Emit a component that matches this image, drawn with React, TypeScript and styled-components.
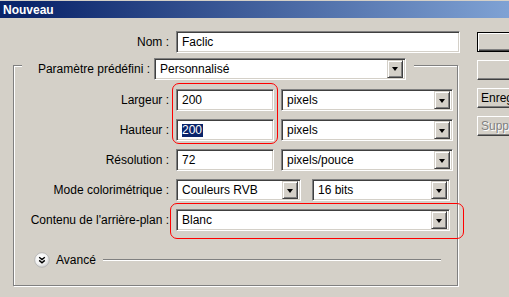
import React from "react";
import styled, { createGlobalStyle } from "styled-components";

const Global = createGlobalStyle`
  html, body { margin: 0; padding: 0; }
  body {
    background: #d4d0c8;
    font-family: "Liberation Sans", Arial, sans-serif;
    font-size: 12px;
    color: #000;
    overflow: hidden;
  }
`;

const Window = styled.div`
  width: 509px;
  height: 297px;
  background: #d4d0c8;
  overflow: hidden;
`;

const TitleBar = styled.div`
  height: 17px;
  border-top: 1px solid #d4d0c8;
  background: linear-gradient(90deg, #0a246a 0%, #0a246a 5%, #7fa2d4 100%);
  color: #fff;
  font-weight: bold;
  font-size: 12px;
  display: flex;
  align-items: center;
  padding-left: 3px;
`;

const Body = styled.div`
  display: flex;
  align-items: flex-start;
`;

const Main = styled.div`
  width: 477px;
  flex: none;
  display: flex;
  flex-direction: column;
`;

const NomRow = styled.div`
  display: flex;
  align-items: center;
  gap: 7px;
  height: 22px;
  margin-top: 13px;
`;

const Label = styled.div<{ $w: number }>`
  width: ${(p) => p.$w}px;
  flex: none;
  display: flex;
  justify-content: flex-end;
  white-space: nowrap;
`;

const Sunken = styled.div<{ $w: number }>`
  box-sizing: border-box;
  width: ${(p) => p.$w}px;
  height: 22px;
  flex: none;
  background: #fff;
  border: 1px solid;
  border-color: #808080 #fff #fff #808080;
  box-shadow: inset 1px 1px 0 #404040, inset -1px -1px 0 #d4d0c8;
  display: flex;
  align-items: center;
  padding: 2px 2px 2px 5px;
  white-space: nowrap;
`;

const ComboText = styled.span`
  flex: 1;
  overflow: hidden;
`;

const DropButton = styled.div`
  box-sizing: border-box;
  width: 16px;
  height: 18px;
  flex: none;
  background: #d4d0c8;
  border: 1px solid;
  border-color: #d4d0c8 #404040 #404040 #d4d0c8;
  box-shadow: inset 1px 1px 0 #fff, inset -1px -1px 0 #808080;
  display: flex;
  align-items: center;
  justify-content: center;
`;

const Arrow = styled.div`
  width: 0;
  height: 0;
  border-left: 3.5px solid transparent;
  border-right: 3.5px solid transparent;
  border-top: 4px solid #000;
  margin-top: 1px;
`;

const Selected = styled.span`
  background: #0a246a;
  color: #fff;
  line-height: 13px;
  padding: 0 1px 0 0;
`;

const Group = styled.div`
  position: relative;
  box-sizing: border-box;
  margin: 12px 0 0 13px;
  width: 445px;
  height: 221px;
  border: 1px solid #808080;
  box-shadow: inset 1px 1px 0 #fff, 1px 1px 0 #fff;
  display: flex;
  flex-direction: column;
`;

const PresetRow = styled.div`
  align-self: flex-start;
  margin: -9px 0 0 8px;
  padding: 0 8px 0 13px;
  background: #d4d0c8;
  display: flex;
  align-items: center;
  gap: 4px;
  height: 23px;
`;

const Rows = styled.div`
  display: flex;
  flex-direction: column;
  gap: 8px;
  margin-top: 9px;
`;

const Row = styled.div`
  display: flex;
  align-items: center;
  gap: 7px;
  height: 22px;
`;

const Pair = styled.div<{ $gap: number }>`
  display: flex;
  gap: ${(p) => p.$gap}px;
`;

const AdvancedRow = styled.div`
  display: flex;
  align-items: center;
  height: 16px;
  margin: 21px 16px 0 20px;
`;

const AdvancedText = styled.span`
  margin: 0 7px 0 6px;
`;

const Etched = styled.div`
  flex: 1;
  height: 1px;
  background: #808080;
  border-bottom: 1px solid #fff;
`;

const Highlight = styled.div`
  position: absolute;
  border: 1px solid #ff0000;
  border-radius: 7px;
  pointer-events: none;
`;

const Buttons = styled.div`
  display: flex;
  flex-direction: column;
  gap: 8px;
  margin-top: 14px;
  flex: none;
`;

const Button = styled.div<{ $default?: boolean; $disabled?: boolean; $left?: boolean }>`
  box-sizing: border-box;
  width: 110px;
  height: 20px;
  background: #d4d0c8;
  display: flex;
  align-items: center;
  justify-content: ${(p) => (p.$left ? "flex-start" : "center")};
  padding-left: ${(p) => (p.$left ? "3px" : "0")};
  white-space: nowrap;
  overflow: hidden;
  color: ${(p) => (p.$disabled ? "#808080" : "#000")};
  text-shadow: ${(p) => (p.$disabled ? "1px 1px 0 #fff" : "none")};
  border: 1px solid;
  border-color: ${(p) => (p.$default ? "#000" : "#fff #404040 #404040 #fff")};
  box-shadow: ${(p) =>
    p.$default
      ? "inset 1px 1px 0 #fff, inset -1px -1px 0 #404040, inset -2px -2px 0 #808080"
      : "inset -1px -1px 0 #808080"};
`;

const Combo = ({ w, text }: { w: number; text: string }) => (
  <Sunken $w={w}>
    <ComboText>{text}</ComboText>
    <DropButton>
      <Arrow />
    </DropButton>
  </Sunken>
);

const AdvancedIcon = () => (
  <svg width="16" height="16" viewBox="0 0 16 16">
    <defs>
      <radialGradient id="adv" cx="0.4" cy="0.35" r="0.7">
        <stop offset="0" stopColor="#ffffff" />
        <stop offset="0.6" stopColor="#f2f2f2" />
        <stop offset="1" stopColor="#c8c8c8" />
      </radialGradient>
    </defs>
    <circle cx="8" cy="8" r="7.3" fill="url(#adv)" stroke="#b0b0b0" strokeWidth="0.8" />
    <path d="M5.2 5.2 L8 7.6 L10.8 5.2 M5.2 8.4 L8 10.8 L10.8 8.4" fill="none" stroke="#000" strokeWidth="1.4" />
  </svg>
);

export default function App() {
  return (
    <Window>
      <Global />
      <TitleBar>Nouveau</TitleBar>
      <Body>
        <Main>
          <NomRow>
            <Label $w={169}>Nom :</Label>
            <Sunken $w={284}>Faclic</Sunken>
          </NomRow>
          <Group>
            <PresetRow>
              <Label $w={115}>Paramètre prédéfini :</Label>
              <Combo w={252} text="Personnalisé" />
            </PresetRow>
            <Rows>
              <Row>
                <Label $w={155}>Largeur :</Label>
                <Sunken $w={98}>200</Sunken>
                <Combo w={172} text="pixels" />
              </Row>
              <Row>
                <Label $w={155}>Hauteur :</Label>
                <Sunken $w={98}>
                  <Selected>200</Selected>
                </Sunken>
                <Combo w={172} text="pixels" />
              </Row>
              <Row>
                <Label $w={155}>Résolution :</Label>
                <Sunken $w={98}>72</Sunken>
                <Combo w={172} text="pixels/pouce" />
              </Row>
              <Row>
                <Label $w={155}>Mode colorimétrique :</Label>
                <Pair $gap={11}>
                  <Combo w={125} text="Couleurs RVB" />
                  <Combo w={138} text="16 bits" />
                </Pair>
              </Row>
              <Row>
                <Label $w={155}>Contenu de l'arrière-plan :</Label>
                <Combo w={274} text="Blanc" />
              </Row>
            </Rows>
            <AdvancedRow>
              <AdvancedIcon />
              <AdvancedText>Avancé</AdvancedText>
              <Etched />
            </AdvancedRow>
            <Highlight style={{ left: 158, top: 17, width: 104, height: 59 }} />
            <Highlight style={{ left: 156, top: 137, width: 292, height: 34 }} />
          </Group>
        </Main>
        <Buttons>
          <Button $default>OK</Button>
          <Button>Annuler</Button>
          <Button $left>Enregistrer le paramètre prédéfini...</Button>
          <Button $left $disabled>
            Supprimer le paramètre prédéfini...
          </Button>
        </Buttons>
      </Body>
    </Window>
  );
}
